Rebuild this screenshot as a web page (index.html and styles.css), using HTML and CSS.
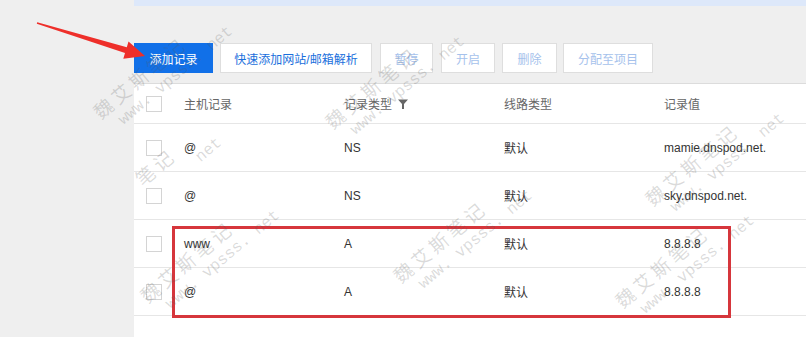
FILE: index.html
```html
<!DOCTYPE html>
<html lang="zh-CN">
<head>
<meta charset="utf-8">
<title>记录管理</title>
<link rel="stylesheet" href="styles.css">
</head>
<body>
<div class="page">
  <div class="topbar"></div>
  <div class="toolbar">
    <button class="btn primary">添加记录</button>
    <button class="btn quick">快速添加网站/邮箱解析</button>
    <button class="btn dis w52">暂停</button>
    <button class="btn dis w54">开启</button>
    <button class="btn dis w55">删除</button>
    <button class="btn dis w90">分配至项目</button>
  </div>
  <div class="table">
    <div class="row head">
      <div class="c chk"><span class="box"></span></div>
      <div class="c">主机记录</div>
      <div class="c">记录类型 <svg class="funnel" width="10" height="10" viewBox="0 0 10 10"><path d="M0 0.5H10L6 5V10H4V5Z" fill="#666"/></svg></div>
      <div class="c">线路类型</div>
      <div class="c last">记录值</div>
    </div>
    <div class="row">
      <div class="c chk"><span class="box"></span></div>
      <div class="c">@</div>
      <div class="c">NS</div>
      <div class="c">默认</div>
      <div class="c last">mamie.dnspod.net.</div>
    </div>
    <div class="row">
      <div class="c chk"><span class="box"></span></div>
      <div class="c">@</div>
      <div class="c">NS</div>
      <div class="c">默认</div>
      <div class="c last">sky.dnspod.net.</div>
    </div>
    <div class="row">
      <div class="c chk"><span class="box"></span></div>
      <div class="c">www</div>
      <div class="c">A</div>
      <div class="c">默认</div>
      <div class="c last">8.8.8.8</div>
    </div>
    <div class="row">
      <div class="c chk"><span class="box"></span></div>
      <div class="c">@</div>
      <div class="c">A</div>
      <div class="c">默认</div>
      <div class="c last">8.8.8.8</div>
    </div>
    <div class="wm wg"><div class="cn">笔记</div><div class="en tail">net</div></div>
  </div>

  <div class="highlight"></div>

  <svg class="arrow" width="160" height="70" viewBox="0 0 160 70">
    <polygon points="37.2,22.2 126.8,47.3 128.5,41.6 145,56 123.3,58.8 125,53.1 36.8,23.8" fill="#ee2f2a"/>
  </svg>

  <div class="wm wa"><div class="cn">魏艾斯笔记</div><div class="en">www. vpsss. net</div></div>
  <div class="wm wb"><div class="cn">魏艾斯笔记</div><div class="en">www. vpsss. net</div></div>
  <div class="wm wc"><div class="cn">魏艾斯笔记</div><div class="en">www. vpsss. net</div></div>
  <div class="wm wd"><div class="cn">魏艾斯笔记</div><div class="en">www. vpsss. net</div></div>
  <div class="wm we"><div class="cn">魏艾斯笔记</div><div class="en">www. vpsss. net</div></div>
  <div class="wm wf"><div class="cn">魏艾斯笔记</div><div class="en">www. vpsss. net</div></div>
</div>
</body>
</html>
```

FILE: styles.css
```css
* { box-sizing: border-box; }
html, body { margin: 0; padding: 0; }
body {
  background: #efefef;
  font-family: "Liberation Sans", "Noto Sans CJK SC", sans-serif;
  font-size: 12px;
  color: #333;
}
.page {
  position: relative;
  width: 806px;
  height: 337px;
  overflow: hidden;
}
.topbar {
  margin-left: 134px;
  height: 6px;
  background: #dde8fa;
}
.toolbar {
  display: flex;
  margin-top: 37px;
  padding-left: 134px;
  height: 30px;
}
.btn {
  height: 30px;
  border: 1px solid #dedede;
  background: #fff;
  font-family: "Liberation Sans", "Noto Sans CJK SC", sans-serif;
  font-size: 12px;
  padding: 0;
  margin-right: 7px;
  color: #1a6fdc;
}
.primary {
  width: 79px;
  background: #1170e8;
  border-color: #1170e8;
  color: #fff;
}
.quick { width: 152px; margin-right: 8px; }
.dis { color: #a6c2ec; }
.w52 { width: 53px; margin-right: 8px; }
.w54 { width: 54px; }
.w55 { width: 55px; margin-right: 6px; }
.w90 { width: 90px; }

.table {
  position: relative;
  margin-top: 10px;
  margin-left: 134px;
  background: #fff;
  border-top: 1px solid #dcdcdc;
  height: 260px;
}
.row {
  display: flex;
  align-items: center;
  height: 48px;
  border-bottom: 1px solid #e6e6e6;
}
.row.head {
  height: 40px;
  color: #666;
}
.c {
  width: 160px;
  flex: none;
  display: flex;
  align-items: center;
}
.c.chk {
  width: 50px;
  padding-left: 12px;
}
.c.last { flex: 1; }
.box {
  display: block;
  width: 16px;
  height: 16px;
  border: 1px solid #d4d4d4;
  background: #fff;
}
.funnel { margin-left: 6px; }

.highlight {
  position: absolute;
  left: 172px;
  top: 226px;
  width: 559px;
  height: 92px;
  border: 3px solid #d6363c;
}
.arrow {
  position: absolute;
  left: 0;
  top: 0;
}

.wm {
  position: absolute;
  transform: rotate(-40deg);
  transform-origin: 0 0;
  color: rgba(90, 90, 90, 0.22);
  white-space: nowrap;
  pointer-events: none;
}
.wm .cn {
  font-family: "Noto Sans CJK SC", sans-serif;
  font-size: 19px;
  line-height: 24px;
  letter-spacing: 4px;
}
.wm .en {
  font-family: "Liberation Mono", monospace;
  font-size: 16px;
  line-height: 20px;
  margin-left: 14px;
}
.wm .en.tail { margin-left: 60px; }
.wa { left: 88px; top: 105px; }
.wb { left: 320px; top: 115px; }
.wc { left: 640px; top: 192px; }
.wd { left: 135px; top: 289px; }
.we { left: 388px; top: 269px; }
.wf { left: 610px; top: 294px; }
.wg { left: -4px; top: 88px; }
```
